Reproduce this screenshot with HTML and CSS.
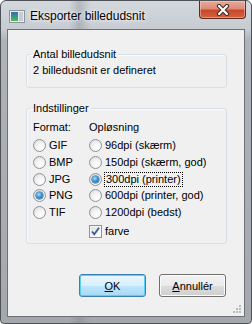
FILE: index.html
```html
<!DOCTYPE html>
<html>

<head>
    <title>Eksporter billedudsnit</title>
    <link rel="stylesheet" href="styles.css">
</head>

<body>
    <div class="window">
        <div class="titlebar">
            <svg class="app-icon" width="16" height="16" viewBox="0 0 16 16">
                <defs>
                    <linearGradient id="pic" x1="0" y1="0" x2="0" y2="1">
                        <stop offset="0" stop-color="#3a6fb0" />
                        <stop offset="0.5" stop-color="#2f9a8a" />
                        <stop offset="1" stop-color="#5cb84a" />
                    </linearGradient>
                </defs>
                <rect x="0.5" y="2.5" width="15" height="12" fill="#e8ecef" stroke="#8d959c" />
                <rect x="2" y="4" width="7" height="9" fill="url(#pic)" />
                <rect x="10" y="4" width="4" height="9" fill="#c5ccd2" />
            </svg>
            <span class="title">Eksporter billedudsnit</span>
            <div class="close">
                <svg width="14" height="12" viewBox="0 0 14 12">
                    <path d="M3 2 L11 10 M11 2 L3 10" stroke="#3b2a27" stroke-width="4.2" stroke-linecap="round" />
                    <path d="M3 2 L11 10 M11 2 L3 10" stroke="#ffffff" stroke-width="2.2" stroke-linecap="round" />
                </svg>
            </div>
        </div>

        <div class="client">
            <fieldset class="group group-count">
                <legend>Antal billedudsnit</legend>
                <p class="count">2 billedudsnit er defineret</p>
            </fieldset>

            <fieldset class="group group-settings">
                <legend>Indstillinger</legend>
                <div class="options">
                    <span class="heading">Format:</span>
                    <span class="heading">Opløsning</span>

                    <label class="radio"><i class="bullet"></i>GIF</label>
                    <label class="radio"><i class="bullet"></i>96dpi (skærm)</label>

                    <label class="radio"><i class="bullet"></i>BMP</label>
                    <label class="radio"><i class="bullet"></i>150dpi (skærm, god)</label>

                    <label class="radio"><i class="bullet"></i>JPG</label>
                    <label class="radio"><i class="bullet checked"></i><span class="focus">300dpi (printer)</span></label>

                    <label class="radio"><i class="bullet checked"></i>PNG</label>
                    <label class="radio"><i class="bullet"></i>600dpi (printer, god)</label>

                    <label class="radio"><i class="bullet"></i>TIF</label>
                    <label class="radio"><i class="bullet"></i>1200dpi (bedst)</label>

                    <span></span>
                    <label class="check">
                        <i class="box">
                            <svg width="11" height="11" viewBox="0 0 11 11">
                                <path d="M2 5.5 L4.3 8.3 L9 1.8" fill="none" stroke="#3d5a98" stroke-width="1.8" />
                            </svg>
                        </i>farve
                    </label>
                </div>
            </fieldset>

            <div class="buttons">
                <button class="btn btn-default"><u>O</u>K</button>
                <button class="btn"><u>A</u>nnullér</button>
            </div>

            <div class="grip">
                <svg width="10" height="10" viewBox="0 0 10 10">
                    <g fill="#b9b9b9">
                        <rect x="7" y="1" width="2" height="2" />
                        <rect x="4" y="4" width="2" height="2" />
                        <rect x="7" y="4" width="2" height="2" />
                        <rect x="1" y="7" width="2" height="2" />
                        <rect x="4" y="7" width="2" height="2" />
                        <rect x="7" y="7" width="2" height="2" />
                    </g>
                </svg>
            </div>
        </div>
    </div>
</body>

</html>
```

FILE: styles.css
```css
body {
    margin: 0;
    padding: 0;
    background: #ffffff;
}

.window {
    width: 252px;
    height: 324px;
    box-sizing: border-box;
    border: 1px solid #4e5257;
    border-radius: 6px 6px 4px 4px;
    background:
        linear-gradient(to right, transparent 68px, rgba(120, 126, 132, 0.35) 78px, transparent 90px),
        linear-gradient(to bottom, #d3d8dd 0px, #c6ccd2 28px, #aeb3b8 40px, #a4a8ac 100%);
    padding: 0 6px 6px 6px;
    display: flex;
    flex-direction: column;
    font-family: "Liberation Sans", Arial, sans-serif;
}

.titlebar {
    height: 28px;
    display: flex;
    align-items: flex-start;
}

.app-icon {
    margin: 7px 0 0 2px;
}

.title {
    margin: 8px 0 0 5px;
    font-size: 12px;
    line-height: 14px;
    color: #000;
    text-shadow: 0 0 6px #f4f6f8, 0 0 3px #f4f6f8;
}

.close {
    margin-left: auto;
    margin-right: -1px;
    width: 47px;
    height: 18px;
    box-sizing: border-box;
    border: 1px solid #5d2a1e;
    border-top: none;
    border-radius: 0 0 4px 4px;
    background: linear-gradient(to bottom, #e9a99a 0%, #dd8b76 45%, #c7472a 55%, #d3633f 100%);
    box-shadow: inset 0 0 0 1px rgba(255, 220, 210, 0.45);
    display: flex;
    justify-content: center;
    align-items: center;
}

.client {
    flex-grow: 1;
    box-sizing: border-box;
    border: 1px solid #6c7176;
    background: #f0f0f0;
    display: flex;
    flex-direction: column;
    font-size: 11px;
    line-height: 13px;
    color: #000;
}

.group {
    border: 1px solid #d5dfe5;
    border-radius: 3px;
    box-shadow: inset 1px 1px 0 #fafcfd;
    min-width: 0;
}

.group legend {
    padding: 0 2px;
    margin-left: -2px;
    line-height: 13px;
}

.group-count {
    margin: 18px 17px 0 18px;
    padding: 3px 6px 10px 6px;
}

.count {
    margin: 0;
}

.group-settings {
    margin: 14px 17px 0 18px;
    padding: 6px 6px 6px 6px;
}

.options {
    display: grid;
    grid-template-columns: 56px auto;
    grid-auto-rows: 16.6px;
    align-items: center;
}

.options .heading {
    height: 13px;
    margin-bottom: -4px;
    align-self: start;
}

.radio,
.check {
    display: flex;
    align-items: center;
    white-space: nowrap;
}

.bullet {
    width: 13px;
    height: 13px;
    box-sizing: border-box;
    border-radius: 50%;
    border: 1px solid #8f9397;
    background: radial-gradient(circle at 65% 70%, #ffffff 0%, #f2f2f2 45%, #d4d6d8 100%);
    margin-right: 3px;
    position: relative;
    flex-shrink: 0;
}

.bullet.checked::after {
    content: "";
    position: absolute;
    left: 2px;
    top: 2px;
    width: 7px;
    height: 7px;
    border-radius: 50%;
    background: radial-gradient(circle at 40% 35%, #a7e0fb 0%, #3c96d4 45%, #1a5b9c 100%);
    box-shadow: 0 0 0 0.5px #1d4f86;
}

.focus {
    outline: 1px dotted #000;
    outline-offset: 0px;
    padding: 0 1px;
}

.check {
    margin-top: 6px;
}

.box {
    width: 13px;
    height: 13px;
    box-sizing: border-box;
    border: 1px solid #8f9397;
    background: linear-gradient(135deg, #d8dadc 0%, #f4f4f4 60%, #ffffff 100%);
    box-shadow: inset 0 0 0 1px #f7f7f7;
    margin-right: 3px;
    display: flex;
    align-items: center;
    justify-content: center;
    flex-shrink: 0;
}

.buttons {
    display: flex;
    justify-content: flex-end;
    gap: 13px;
    margin: 30px 18px 0 0;
}

.btn {
    width: 67px;
    height: 23px;
    box-sizing: border-box;
    padding: 0;
    border: 1px solid #707070;
    border-radius: 3px;
    background: linear-gradient(to bottom, #f2f2f2 0%, #ebebeb 50%, #dddddd 51%, #cfcfcf 100%);
    box-shadow: inset 0 0 0 1px #fcfcfc;
    font-family: "Liberation Sans", Arial, sans-serif;
    font-size: 11px;
    color: #000;
}

.btn-default {
    border-color: #3c7fb1;
    background: linear-gradient(to bottom, #eaf6fd 0%, #d9f0fc 50%, #bee6fd 51%, #a7d9f5 100%);
    box-shadow: inset 0 0 0 1px #5ecdf6;
}

.grip {
    margin: auto 2px 2px 0;
    align-self: flex-end;
    line-height: 0;
}
```
